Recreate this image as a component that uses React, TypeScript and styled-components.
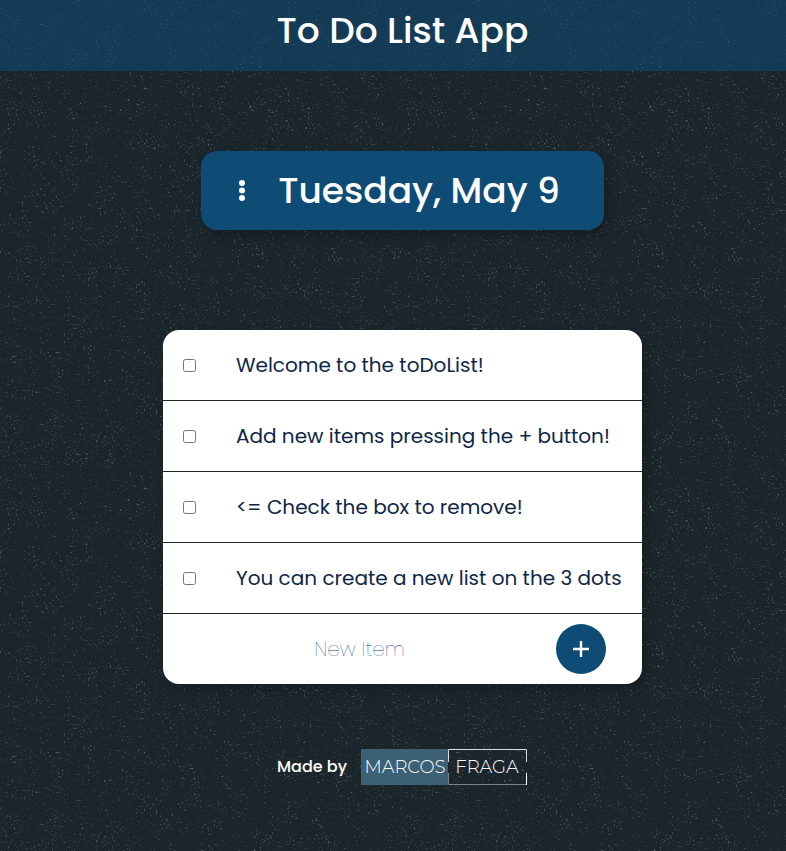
import React, { useState } from "react";
import styled, { createGlobalStyle } from "styled-components";

const speckles = encodeURIComponent(
  `<svg xmlns="http://www.w3.org/2000/svg" width="400" height="400">
    <filter id="s" x="0" y="0" width="100%" height="100%" color-interpolation-filters="sRGB">
      <feTurbulence type="fractalNoise" baseFrequency="0.5" numOctaves="2" seed="8" stitchTiles="stitch" result="grain"/>
      <feTurbulence type="fractalNoise" baseFrequency="0.06" numOctaves="2" seed="3" stitchTiles="stitch" result="patches"/>
      <feComposite in="grain" in2="patches" operator="arithmetic" k2="0.8" k3="0.2"/>
      <feColorMatrix values="0 0 0 0 0.6  0 0 0 0 0.66  0 0 0 0 0.68  2.2 1.6 0 0 -2.2"/>
      <feComponentTransfer><feFuncA type="table" tableValues="0 0.42 0.7"/></feComponentTransfer>
    </filter>
    <rect width="400" height="400" filter="url(#s)"/>
  </svg>`
);

const GlobalStyle = createGlobalStyle`
  *, *::before, *::after { box-sizing: border-box; }
  body {
    margin: 0;
    background: #1b262c url("data:image/svg+xml,${speckles}");
    font-family: Poppins, Inter, sans-serif;
    color: #ffffff;
  }
`;

const Page = styled.div`
  display: flex;
  flex-direction: column;
  min-height: 100vh;
`;

const Header = styled.header`
  padding: 0 0 10px 19px;
  background: rgba(15, 76, 117, 0.57);
  text-align: center;
`;

const Title = styled.h1`
  margin: 0;
  font-size: 36px;
  line-height: 61px;
  font-weight: 500;
`;

const Main = styled.main`
  display: flex;
  flex-direction: column;
  align-items: center;
  padding: 80px 0 0 19px;
`;

const DateBar = styled.section`
  display: flex;
  align-items: center;
  gap: 24px;
  padding: 10px 44px 10px 29px;
  margin-bottom: 100px;
  border-radius: 16px;
  background: #0f4c75;
  box-shadow: 4px 6px 12px rgba(0, 0, 0, 0.25);
`;

const MenuButton = styled.button`
  display: grid;
  place-items: center;
  width: 24px;
  height: 32px;
  padding: 0;
  border: 0;
  background: none;
  color: inherit;
  cursor: pointer;
`;

const DateTitle = styled.h2`
  margin: 0;
  font-size: 36px;
  line-height: 59px;
  font-weight: 500;
`;

const Card = styled.section`
  width: 100%;
  max-width: 479px;
  border-radius: 16px;
  background: #ffffff;
  box-shadow: 4px 6px 12px rgba(0, 0, 0, 0.25);
`;

const List = styled.ul`
  margin: 0;
  padding: 0;
  list-style: none;
`;

const Row = styled.li`
  display: flex;
  align-items: center;
  gap: 40px;
  min-height: 71px;
  padding: 0 20px;
  border-bottom: 1px solid #1b262c;
`;

const Check = styled.input`
  flex: none;
  width: 13px;
  height: 13px;
  margin: 0;
`;

const ItemLabel = styled.label`
  font-size: 20px;
  line-height: 30px;
  font-weight: 400;
  white-space: nowrap;
  color: #0d2648;
`;

const AddForm = styled.form`
  display: flex;
  align-items: center;
  min-height: 70px;
  padding-right: 36px;
`;

const NewItem = styled.input`
  flex: 1;
  min-width: 0;
  height: 50px;
  padding: 0;
  border: 0;
  background: transparent;
  font: inherit;
  font-size: 20px;
  font-weight: 200;
  text-align: center;
  color: #0d2648;
  &:focus { outline: none; }
  &::placeholder { color: #0a3a8c; opacity: 1; }
`;

const AddButton = styled.button`
  display: grid;
  place-items: center;
  width: 50px;
  height: 50px;
  padding: 0;
  border: 0;
  border-radius: 50%;
  background: #0f4c75;
  color: #ffffff;
  cursor: pointer;
`;

const Footer = styled.footer`
  display: flex;
  align-items: center;
  justify-content: center;
  gap: 14px;
  padding: 65px 0 64px 18px;
  font-size: 16px;
  line-height: 24px;
  font-weight: 500;
`;

const AuthorLink = styled.a`
  display: block;
  line-height: 0;
`;

const DotsIcon = () => (
  <svg width="8" height="22" viewBox="0 0 8 22" fill="currentColor" aria-hidden="true">
    <circle cx="4" cy="3" r="3" />
    <circle cx="4" cy="10.5" r="3" />
    <circle cx="4" cy="18" r="3" />
  </svg>
);

const PlusIcon = () => (
  <svg width="16" height="16" viewBox="0 0 16 16" fill="currentColor" aria-hidden="true">
    <path d="M6.8 0h2.4v6.8H16v2.4H9.2V16H6.8V9.2H0V6.8h6.8z" />
  </svg>
);

const AuthorLogo = () => (
  <svg
    width="166"
    height="36"
    viewBox="0 0 166 36"
    fontFamily="Montserrat, Inter, sans-serif"
    fontSize="18"
    fontWeight="300"
    fill="#ffffff"
    textAnchor="middle"
  >
    <rect width="87" height="36" fill="#3c6074" />
    <text x="44" y="24">MARCOS</text>
    <text x="126" y="24">FRAGA</text>
    <path d="M87.5 13V.5h78V13" fill="none" stroke="#d5dcdf" />
    <path d="M87.5 24v11.5h78" fill="none" stroke="#78858c" />
    <path d="M165.5 24v12" stroke="#ffffff" />
  </svg>
);

const startItems = [
  "Welcome to the toDoList!",
  "Add new items pressing the + button!",
  "<= Check the box to remove!",
  "You can create a new list on the 3 dots",
];

export default function App() {
  const [items, setItems] = useState(startItems);
  const [draft, setDraft] = useState("");

  const addItem = (event: React.FormEvent) => {
    event.preventDefault();
    if (draft.trim()) {
      setItems([...items, draft.trim()]);
      setDraft("");
    }
  };

  return (
    <Page>
      <GlobalStyle />
      <Header>
        <Title>To Do List App</Title>
      </Header>
      <Main>
        <DateBar>
          <MenuButton type="button" aria-label="Lists">
            <DotsIcon />
          </MenuButton>
          <DateTitle>Tuesday, May 9</DateTitle>
        </DateBar>
        <Card>
          <List>
            {items.map((text, index) => (
              <Row key={text + index}>
                <Check
                  id={`item-${index}`}
                  type="checkbox"
                  checked={false}
                  onChange={() => setItems(items.filter((_, i) => i !== index))}
                />
                <ItemLabel htmlFor={`item-${index}`}>{text}</ItemLabel>
              </Row>
            ))}
          </List>
          <AddForm onSubmit={addItem}>
            <NewItem
              type="text"
              aria-label="New Item"
              placeholder="New Item"
              autoComplete="off"
              value={draft}
              onChange={(event) => setDraft(event.target.value)}
            />
            <AddButton type="submit" aria-label="Add item">
              <PlusIcon />
            </AddButton>
          </AddForm>
        </Card>
      </Main>
      <Footer>
        <span>Made by</span>
        <AuthorLink href="#" aria-label="Marcos Fraga">
          <AuthorLogo />
        </AuthorLink>
      </Footer>
    </Page>
  );
}
